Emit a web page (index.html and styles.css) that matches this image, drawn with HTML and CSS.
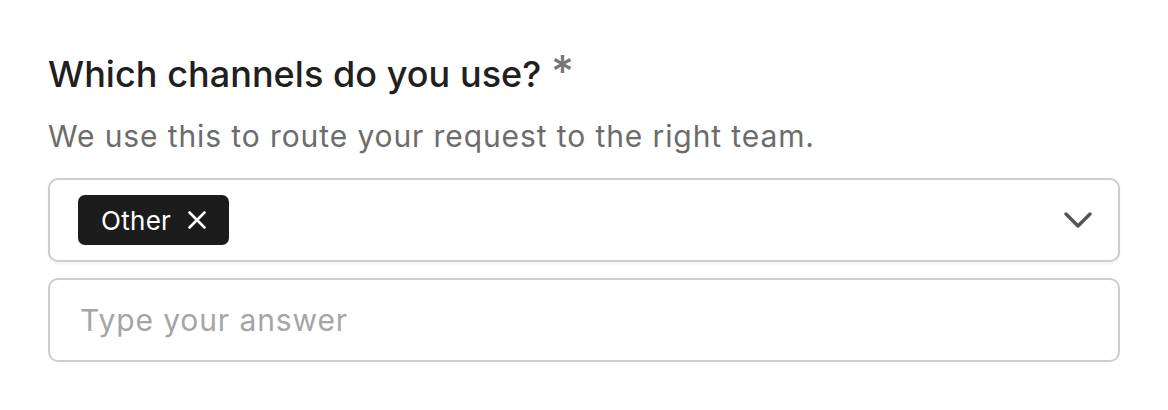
FILE: index.html
```html
<!DOCTYPE html>
<html>
<head>
<meta charset="utf-8">
<link rel="stylesheet" href="styles.css">
</head>
<body>
<div class="field">
  <h2 class="label">Which channels do you use? <span class="req">*</span></h2>
  <p class="help">We use this to route your request to the right team.</p>
  <div class="select">
    <div class="chips">
      <span class="chip">Other
        <svg class="chip-x" viewBox="0 0 20 20" width="20" height="20"><path d="M2.5 2.5L17.5 17.5M17.5 2.5L2.5 17.5" stroke="#fff" stroke-width="2.6" stroke-linecap="round" fill="none"/></svg>
      </span>
    </div>
    <svg class="chevron" viewBox="0 0 28 16" width="28" height="16"><path d="M2 2L14 14L26 2" stroke="#555" stroke-width="3.4" stroke-linecap="round" stroke-linejoin="round" fill="none"/></svg>
  </div>
  <input class="answer" type="text" placeholder="Type your answer">
</div>
</body>
</html>
```
FILE: styles.css
```css
* { box-sizing: border-box; }
html, body { margin: 0; padding: 0; background: #fff; }
body { font-family: Inter, "Noto Sans", sans-serif; }
.field {
  width: 1072px;
  margin-left: 48px;
  padding-top: 50px;
  display: flex;
  flex-direction: column;
}
.label {
  margin: 0;
  font-size: 36px;
  line-height: 48px;
  font-weight: 500;
  color: #202020;
  letter-spacing: 0.05px;
}
.req {
  color: #777;
  font-size: 44px;
  font-weight: 500;
  line-height: 0;
}
.help {
  margin: 18px 0 0 0;
  font-size: 30px;
  line-height: 40px;
  letter-spacing: 0.9px;
  color: #6c6c6c;
}
.select {
  margin-top: 22px;
  height: 84px;
  border: 2px solid #cdcdcd;
  border-radius: 10px;
  display: flex;
  align-items: center;
  justify-content: space-between;
  padding: 0 26px 0 28px;
  box-shadow: 0 2px 3px rgba(0,0,0,0.06);
}
.chips { display: flex; gap: 8px; }
.chip {
  display: inline-flex;
  align-items: center;
  gap: 16px;
  height: 50px;
  padding: 0 22px 0 23px;
  background: #1c1c1d;
  color: #fff;
  border-radius: 7px;
  font-size: 26px;
  letter-spacing: 0.3px;
}
.chip-x { display: block; }
.chevron { display: block; }
.answer {
  margin-top: 16px;
  height: 84px;
  border: 2px solid #cdcdcd;
  border-radius: 10px;
  padding: 0 30px;
  font-family: Inter, "Noto Sans", sans-serif;
  font-size: 30px;
  letter-spacing: 0.9px;
  color: #222;
  outline: none;
}
.answer::placeholder { color: #a5a5a5; }
```
